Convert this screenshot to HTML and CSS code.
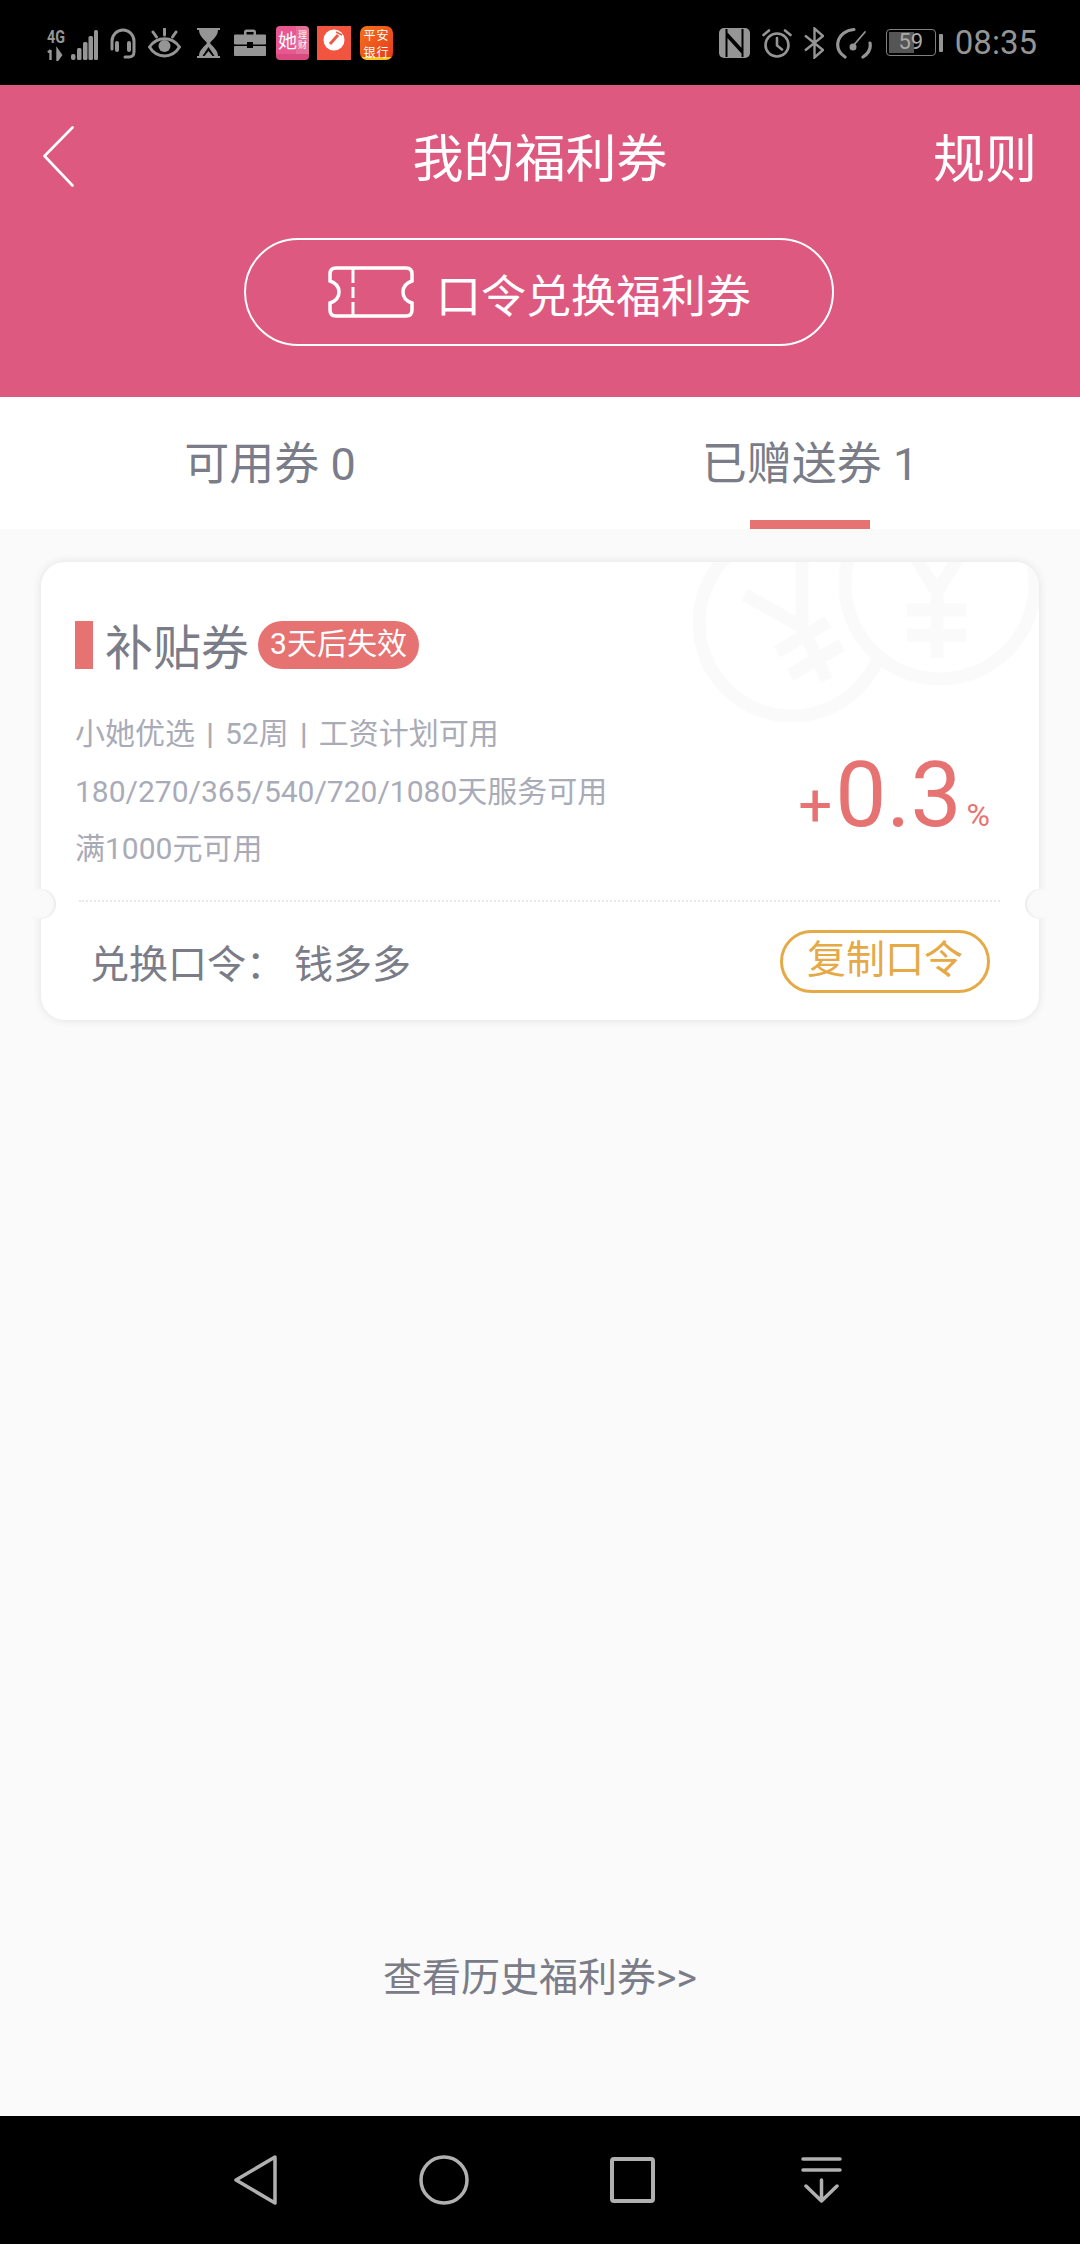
FILE: index.html
```html
<!DOCTYPE html>
<html lang="zh-CN">
<head>
  <meta charset="UTF-8" />
  <meta name="viewport" content="width=device-width, initial-scale=1.0"/>
  <title>我的福利券</title>
  <link rel="stylesheet" href="styles.css">
</head>
<body>
  <div class="status-bar">
    <div class="status-left">
      <svg class="ico-signal" width="51" height="36" viewBox="0 -4 51 36">
        <text x="0" y="14" class="tiny" textLength="18" lengthAdjust="spacingAndGlyphs">4G</text>
        <path d="M3.500 21v10M1 23.500 3.500 21M10.500 21v10l3.500-5z" stroke="#959595" stroke-width="2.400" fill="#959595"/>
        <rect x="24" y="25" width="4.500" height="6" rx="2"/>
        <rect x="30" y="19" width="4.500" height="12" rx="1.500"/>
        <rect x="36" y="13" width="4.500" height="18" rx="1.500"/>
        <rect x="41.500" y="7" width="4.500" height="24" rx="1.500"/>
        <rect x="47" y="1" width="4" height="30" rx="1.500"/>
      </svg>
      <svg class="ico-headset" width="28" height="32" viewBox="0 0 28 32" fill="none" stroke="#959595" stroke-width="3" stroke-linecap="round">
        <path d="M3 22V14a11 11 0 0 1 22 0v11c0 3-2 5-5 5h-4"/>
        <path d="M8 16v7M20 16v7" stroke-width="4"/>
      </svg>
      <svg class="ico-eye" width="33" height="30" viewBox="0 0 33 30" fill="none" stroke="#959595" stroke-width="3" stroke-linecap="round">
        <path d="M1.500 19C9 8 24 8 31.500 19C24 31 9 31 1.500 19Z"/>
        <circle cx="16.500" cy="18" r="6" fill="#959595" stroke="none"/>
        <path d="M16.500 1v6M5 4l3.500 5M28 4l-3.500 5"/>
      </svg>
      <svg class="ico-glass" width="23" height="30" viewBox="0 0 23 30">
        <path d="M0 0h23v2h-2c0 6-6 10-8 13 2 3 8 7 8 13h2v2H0v-2h2c0-6 6-10 8-13C8 12 2 8 2 2H0z"/>
        <path d="M5 2h13c-1 3-4 7-6.500 9.500C9 9 6 5 5 2z" fill="#959595"/>
        <path d="M11.500 19l6 9h-12z" fill="#000"/>
        <path d="M11.500 23l4 5h-8z"/>
      </svg>
      <svg class="ico-case" width="32" height="27" viewBox="0 0 32 27">
        <path d="M10 6V3a2.500 2.500 0 0 1 2.500-2.500h7A2.500 2.500 0 0 1 22 3v3h-2.500V3h-7v3z"/>
        <rect x="0" y="5.500" width="32" height="10" rx="1"/>
        <rect x="0" y="17" width="32" height="10" rx="1"/>
        <rect x="13" y="13" width="6" height="6" fill="#000"/>
      </svg>
      <div class="app app-pink"><span class="app-big">她</span><span class="app-side">理财</span></div>
      <div class="app app-red">
        <svg width="22" height="22" viewBox="0 0 22 22"><circle cx="11" cy="11" r="10.500" fill="#fff"/><path d="M7 15 15 6" stroke="#f05a45" stroke-width="3"/><path d="M13 3l6 3" stroke="#f05a45" stroke-width="1.500"/></svg>
      </div>
      <div class="app app-orange">平安<br>银行</div>
    </div>
    <div class="status-right">
      <svg width="31" height="30" viewBox="0 0 31 30" fill="none">
        <rect width="31" height="30" rx="5" fill="#959595"/>
        <path d="M7.500 1V29M7.500 5 23 22M23.500 1V29M23.500 25 8 8" stroke="#000" stroke-width="2"/>
      </svg>
      <svg width="30" height="30" viewBox="0 0 30 30" fill="none" stroke="#959595" stroke-width="2.600" stroke-linecap="round">
        <circle cx="15" cy="17" r="11.500"/>
        <path d="M15 10v7.500l5 4M1.500 7 7 2.500M28.500 7 23 2.500"/>
      </svg>
      <svg width="20" height="32" viewBox="0 0 20 32" fill="none" stroke="#959595" stroke-width="2.400">
        <path d="M1 8.500 19 23l-8.500 7.500V1.500L19 9 1 23.500"/>
      </svg>
      <svg width="36" height="32" viewBox="0 0 36 32" fill="none" stroke="#959595" stroke-width="3.200" stroke-linecap="round">
        <path d="M9 30C3 26 1 20 2 15 3.500 8 10 3 18 2.500"/>
        <path d="M27 30c6-4 8-9 7-14"/>
        <path d="M17 19 29 5" stroke-width="1.800"/>
        <circle cx="17" cy="20" r="3.500" fill="#959595" stroke="none"/>
      </svg>
      <div class="battery">
        <div class="battery-box"><span class="battery-fill"></span><span class="battery-num">59</span></div>
        <span class="battery-nub"></span>
      </div>
      <span class="clock">08:35</span>
    </div>
  </div>

  <div class="header">
    <div class="nav-row">
      <svg class="back" width="31" height="61" viewBox="0 0 31 61" fill="none" stroke="#fff" stroke-width="2.600" stroke-linecap="round" stroke-linejoin="round">
        <path d="M29.500 1.500 1.500 30l28 29.500"/>
      </svg>
      <div class="nav-title">我的福利券</div>
      <div class="nav-rule">规则</div>
    </div>
    <div class="redeem-btn">
      <svg width="86" height="52" viewBox="0 0 86 52" fill="none" stroke="#fff" stroke-width="3.500">
        <path d="M8 2h70q6 0 6 6v7q-9 3-9 11t9 11v7q0 6-6 6H8q-6 0-6-6v-7q9-3 9-11T2 15V8q0-6 6-6z"/>
        <path d="M25 2v15M25 21v11M25 36v14" stroke-width="3"/>
      </svg>
      <span class="redeem-text">口令兑换福利券</span>
    </div>
  </div>

  <div class="tabs">
    <div class="tab">可用券 0</div>
    <div class="tab active">已赠送券 1</div>
  </div>

  <div class="content">
    <div class="coupon">
      <svg class="coins" width="346" height="160" viewBox="693 562 346 160" fill="none" stroke="#fafafa" stroke-width="13">
        <circle cx="792" cy="623" r="93"/>
        <path d="M802 627 827 680M777 652 828 622M790 675 842 645M802 627 745 595M802 627V562"/>
        <circle cx="940" cy="584" r="95" fill="#fff"/>
        <path d="M937 658V592L908 545M937 592 966 545M907 610H966M907 635H966"/>
      </svg>
      <div class="coupon-top">
        <div class="coupon-info">
          <div class="coupon-head">
            <span class="mark"></span>
            <span class="coupon-name">补贴券</span>
            <span class="expire">3天后失效</span>
          </div>
          <div class="rules">
            <div>小她优选<span class="sep">|</span>52周<span class="sep">|</span>工资计划可用</div>
            <div>180/270/365/540/720/1080天服务可用</div>
            <div>满1000元可用</div>
          </div>
        </div>
        <div class="rate"><span class="plus">+</span><span class="num">0.3</span><span class="pct">%</span></div>
      </div>
      <div class="divider"></div>
      <div class="coupon-foot">
        <div class="code"><span class="code-label">兑换口令：</span><span>钱多多</span></div>
        <div class="copy-btn">复制口令</div>
      </div>
      <span class="notch notch-left"></span>
      <span class="notch notch-right"></span>
    </div>
    <div class="history">查看历史福利券&gt;&gt;</div>
  </div>

  <div class="nav-bar">
    <svg width="43" height="50" viewBox="0 0 43 50" fill="none" stroke="#b0b0b0" stroke-width="3.500" stroke-linejoin="round">
      <path d="M41 2 2 25l39 23z"/>
    </svg>
    <svg width="50" height="50" viewBox="0 0 50 50" fill="none" stroke="#b0b0b0" stroke-width="3.500">
      <circle cx="25" cy="25" r="23"/>
    </svg>
    <svg width="45" height="46" viewBox="0 0 45 46" fill="none" stroke="#b0b0b0" stroke-width="4" stroke-linejoin="round">
      <rect x="2" y="2" width="41" height="42" rx="2"/>
    </svg>
    <svg width="41" height="46" viewBox="0 0 41 46" fill="none" stroke="#b0b0b0" stroke-width="3.500" stroke-linecap="round" stroke-linejoin="round">
      <path d="M2 2h37M2 13h37M20.500 23v21M5 29l15.500 15L36 29"/>
    </svg>
  </div>
</body>
</html>
```

FILE: styles.css
```css
* {
  box-sizing: border-box;
}

body {
  margin: 0;
  width: 1080px;
  height: 2244px;
  overflow: hidden;
  display: flex;
  flex-direction: column;
  background: #fafafa;
  font-family: Roboto, "Noto Sans CJK SC", sans-serif;
  color: #7a7c88;
}

/* status bar */
.status-bar {
  height: 85px;
  flex: none;
  background: #000;
  display: flex;
  justify-content: space-between;
  align-items: center;
  padding: 0 43px 0 47px;
}

.status-left,
.status-right {
  display: flex;
  align-items: center;
  fill: #959595;
}

.status-left svg,
.status-right svg {
  display: block;
  flex: none;
}

.tiny {
  font-family: Roboto, sans-serif;
  font-size: 18px;
  font-weight: bold;
}

.ico-signal { margin-right: 11px; }
.ico-headset { margin-right: 11px; }
.ico-eye { margin-right: 16px; }
.ico-glass { margin-right: 14px; }
.ico-case { margin-right: 10px; }

.app {
  width: 33px;
  height: 34px;
  border-radius: 4px;
  color: #fff;
  overflow: hidden;
  display: flex;
  align-items: center;
  justify-content: center;
  font-family: "Noto Sans CJK SC", sans-serif;
}

.app-pink {
  background: linear-gradient(to right, #e8578f 60%, #e2709b 60%);
  border-bottom: 6px solid #d94a80;
  margin-right: 8px;
  gap: 1px;
}

.app-big {
  font-size: 19px;
  line-height: 19px;
}

.app-side {
  width: 9px;
  font-size: 9px;
  line-height: 10px;
}

.app-red {
  width: 34px;
  border-radius: 0;
  background: #f2553f;
  margin-right: 9px;
  padding-bottom: 6px;
}

.app-orange {
  display: block;
  text-align: center;
  background: linear-gradient(to bottom, transparent 31px, #f7c823 31px), linear-gradient(to bottom right, #f5721a, #e7391f);
  border-radius: 7px;
  font-size: 12px;
  line-height: 17px;
  letter-spacing: 1px;
}

.status-right {
  gap: 12px;
}

.battery {
  display: flex;
  align-items: center;
  gap: 3px;
  margin-left: 2px;
}

.battery-box {
  position: relative;
  width: 50px;
  height: 27px;
  border: 1.500px solid #808080;
  border-radius: 4px;
  padding: 2px;
}

.battery-fill {
  display: block;
  width: 58%;
  height: 100%;
  background: #555;
}

.battery-num {
  position: absolute;
  left: 0;
  right: 0;
  top: 0;
  text-align: center;
  font-size: 22px;
  line-height: 24px;
  color: #aaa;
}

.battery-nub {
  width: 4px;
  height: 18px;
  border-radius: 1px;
  background: #959595;
}

.clock {
  font-size: 33px;
  color: #959595;
}

/* pink header */
.header {
  height: 312px;
  flex: none;
  background: #de5980;
  color: #fff;
}

.nav-row {
  height: 146px;
  display: grid;
  grid-template-columns: 1fr auto 1fr;
  align-items: center;
  padding: 0 43px 6px 43px;
}

.back {
  margin-top: 3px;
}

.nav-title {
  font-size: 51px;
}

.nav-rule {
  justify-self: end;
  font-size: 52px;
}

.redeem-btn {
  width: 590px;
  height: 108px;
  margin: 7px 0 0 244px;
  border: 2px solid #fff;
  border-radius: 54px;
  display: flex;
  align-items: center;
  gap: 22px;
  padding-left: 82px;
  font-size: 45px;
}

.redeem-text {
  padding-top: 2px;
}

/* tabs */
.tabs {
  height: 132px;
  flex: none;
  background: #fff;
  display: flex;
}

.tab {
  flex: 1;
  position: relative;
  text-align: center;
  font-size: 45px;
  line-height: 136px;
}

.tab.active::after {
  content: "";
  position: absolute;
  bottom: 0;
  left: 50%;
  width: 120px;
  height: 9px;
  margin-left: -60px;
  background: #e77272;
}

/* coupon list */
.content {
  flex: 1;
  display: flex;
  flex-direction: column;
  padding: 33px 41px 0;
}

.coupon {
  position: relative;
  height: 458px;
  background: #fff;
  border-radius: 24px;
  box-shadow: 0 0 10px rgba(0,0,0,0.1);
}

.coins {
  position: absolute;
  top: 0;
  right: 0;
  border-top-right-radius: 24px;
}

.coupon-top {
  position: relative;
  height: 338px;
  display: flex;
  justify-content: space-between;
  padding: 59px 49px 0 34px;
}

.coupon-head {
  display: flex;
  align-items: center;
  height: 48px;
}

.mark {
  width: 18px;
  height: 48px;
  background: #e77272;
  margin-right: 12px;
}

.coupon-name {
  font-size: 48px;
  margin-right: 9px;
  padding-bottom: 2px;
}

.expire {
  width: 161px;
  height: 48px;
  border-radius: 24px;
  background: #e77272;
  color: #fff;
  font-size: 30px;
  line-height: 46px;
  text-align: center;
}

.rules {
  margin-top: 36px;
  font-size: 30px;
  line-height: 57.500px;
  color: #a9abb7;
}

.sep {
  display: inline-block;
  width: 30px;
  text-align: center;
  font-weight: 700;
}

.rate {
  align-self: flex-end;
  color: #e77272;
  line-height: 1;
  margin-bottom: 59px;
}

.plus {
  font-size: 60px;
  margin-right: 3px;
}

.num {
  font-size: 91px;
}

.pct {
  font-size: 32px;
  margin-left: 5px;
}

.divider {
  position: relative;
  margin: 0 39px 0 38px;
  border-top: 2px dotted #e8e8e8;
}

.coupon-foot {
  position: relative;
  height: 118px;
  display: flex;
  align-items: center;
  justify-content: space-between;
  padding: 0 49px;
  font-size: 39px;
}

.code-label {
  margin-right: 9px;
}

.copy-btn {
  width: 210px;
  height: 63px;
  border: 3px solid #e5a945;
  border-radius: 32px;
  color: #e5a945;
  line-height: 54px;
  text-align: center;
}

.notch {
  position: absolute;
  top: 327px;
  width: 30px;
  height: 30px;
  border-radius: 50%;
  background: #fafafa;
}

.notch-left {
  left: -15px;
  box-shadow: inset -2px 0 2px rgba(0,0,0,0.06);
}

.notch-right {
  right: -16px;
  box-shadow: inset 2px 0 2px rgba(0,0,0,0.06);
}

.history {
  margin-top: auto;
  padding-bottom: 113px;
  text-align: center;
  font-size: 39px;
  line-height: 50px;
}

/* android nav bar */
.nav-bar {
  height: 128px;
  flex: none;
  background: #000;
  display: flex;
  align-items: center;
  padding-left: 234px;
}

.nav-bar svg:nth-child(1) { margin-right: 142px; }
.nav-bar svg:nth-child(2) { margin-right: 141px; }
.nav-bar svg:nth-child(3) { margin-right: 146px; }
```
